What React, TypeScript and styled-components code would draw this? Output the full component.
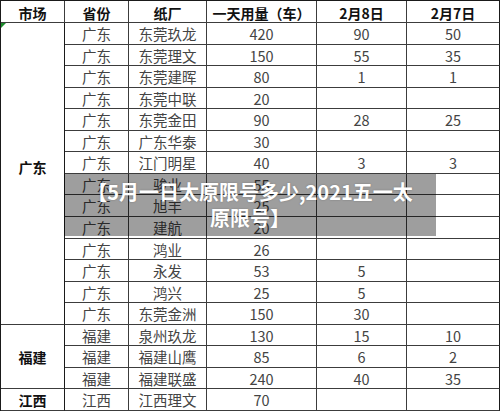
import * as React from 'react';
import styled, { createGlobalStyle } from 'styled-components';

const GlobalStyle = createGlobalStyle`
  html, body {
    margin: 0;
    padding: 0;
    background: #fff;
  }
  body {
    font-family: "Noto Sans CJK SC", "Liberation Sans", sans-serif;
  }
`;

interface Row {
  province: string;
  mill: string;
  daily: string;
  feb8?: string;
  feb7?: string;
}

const rows: Row[] = [
  { province: '广东', mill: '东莞玖龙', daily: '420', feb8: '90', feb7: '50' },
  { province: '广东', mill: '东莞理文', daily: '150', feb8: '55', feb7: '35' },
  { province: '广东', mill: '东莞建晖', daily: '80', feb8: '1', feb7: '1' },
  { province: '广东', mill: '东莞中联', daily: '20' },
  { province: '广东', mill: '东莞金田', daily: '90', feb8: '28', feb7: '25' },
  { province: '广东', mill: '广东华泰', daily: '30' },
  { province: '广东', mill: '江门明星', daily: '40', feb8: '3', feb7: '3' },
  { province: '广东', mill: '骏业', daily: '55' },
  { province: '广东', mill: '旭丰', daily: '25' },
  { province: '广东', mill: '建航', daily: '20' },
  { province: '广东', mill: '鸿业', daily: '26' },
  { province: '广东', mill: '永发', daily: '53', feb8: '5' },
  { province: '广东', mill: '鸿兴', daily: '25', feb8: '5' },
  { province: '广东', mill: '东莞金洲', daily: '150', feb8: '30' },
  { province: '福建', mill: '泉州玖龙', daily: '130', feb8: '15', feb7: '10' },
  { province: '福建', mill: '福建山鹰', daily: '85', feb8: '6', feb7: '2' },
  { province: '福建', mill: '福建联盛', daily: '240', feb8: '40', feb7: '35' },
  { province: '江西', mill: '江西理文', daily: '70' },
];

// merged cells of the first column; lift nudges the label up a bit
const markets = [
  { name: '广东', start: 2, end: 16, lift: 12 },
  { name: '福建', start: 16, end: 19, lift: 0 },
  { name: '江西', start: 19, end: 20, lift: 0 },
];

const Wrap = styled.div`
  position: relative;
  width: 500px;
  height: 411px;
  overflow: hidden;
`;

const Sheet = styled.div`
  box-sizing: border-box;
  width: 500px;
  height: 411px;
  display: grid;
  grid-template-columns: 64px 64px 78px 110px 90px 93px;
  grid-template-rows: 22px repeat(18, 1fr);
  border-left: 1px solid #1a1a1a;
  border-top: 1px solid #1a1a1a;
`;

const Cell = styled.div<{ $head?: boolean; $last?: boolean }>`
  box-sizing: border-box;
  display: flex;
  align-items: center;
  justify-content: center;
  padding-top: 2px;
  border-right: 1px solid ${(p) => (p.$last ? '#1a1a1a' : '#3c3c3c')};
  border-bottom: 1px solid #3c3c3c;
  font-size: ${(p) => (p.$head ? '14px' : '14.5px')};
  font-weight: ${(p) => (p.$head ? 700 : 400)};
  color: ${(p) => (p.$head ? '#111' : '#444')};
  white-space: nowrap;
  line-height: 1;
`;

const MarketCell = styled(Cell)<{ $start: number; $end: number; $lift: number }>`
  grid-column: 1;
  grid-row: ${(p) => p.$start} / ${(p) => p.$end};
  position: relative;
  font-weight: 700;
  font-size: 14px;
  color: #111;
  border-right-color: #1a1a1a;
  padding-top: 0;
  padding-bottom: ${(p) => p.$lift}px;
`;

const Flag = styled.span`
  position: absolute;
  top: 0;
  left: 0;
  width: 0;
  height: 0;
  border-top: 5px solid #1a8a2a;
  border-right: 5px solid transparent;
`;

const Caption = styled.div`
  position: absolute;
  left: 64px;
  top: 174px;
  width: 372px;
  height: 62px;
  background: rgba(0, 0, 0, 0.38);
  display: flex;
  align-items: center;
  justify-content: center;
  text-align: center;
  color: #fff;
  font-size: 20px;
  font-weight: 700;
  line-height: 26px;
  text-shadow: 0 0 2px rgba(0, 0, 0, 0.25);
`;

const CaptionText = styled.div`
  width: 340px;
`;

export default function App() {
  return (
    <>
      <GlobalStyle />
      <Wrap>
        <Sheet>
          <Cell $head>市场</Cell>
          <Cell $head>省份</Cell>
          <Cell $head>纸厂</Cell>
          <Cell $head>一天用量（车）</Cell>
          <Cell $head>2月8日</Cell>
          <Cell $head $last>2月7日</Cell>
          {markets.map((m, i) => (
            <MarketCell key={m.name} $start={m.start} $end={m.end} $lift={m.lift}>
              {i === 0 && <Flag />}
              {m.name}
            </MarketCell>
          ))}
          {rows.map((r, i) => (
            <React.Fragment key={i}>
              <Cell style={{ gridRow: i + 2, gridColumn: 2 }}>{r.province}</Cell>
              <Cell style={{ gridRow: i + 2, gridColumn: 3 }}>{r.mill}</Cell>
              <Cell style={{ gridRow: i + 2, gridColumn: 4 }}>{r.daily}</Cell>
              <Cell style={{ gridRow: i + 2, gridColumn: 5 }}>{r.feb8}</Cell>
              <Cell $last style={{ gridRow: i + 2, gridColumn: 6 }}>{r.feb7}</Cell>
            </React.Fragment>
          ))}
        </Sheet>
        <Caption>
          <CaptionText>【5月一日太原限号多少,2021五一太原限号】</CaptionText>
        </Caption>
      </Wrap>
    </>
  );
}
